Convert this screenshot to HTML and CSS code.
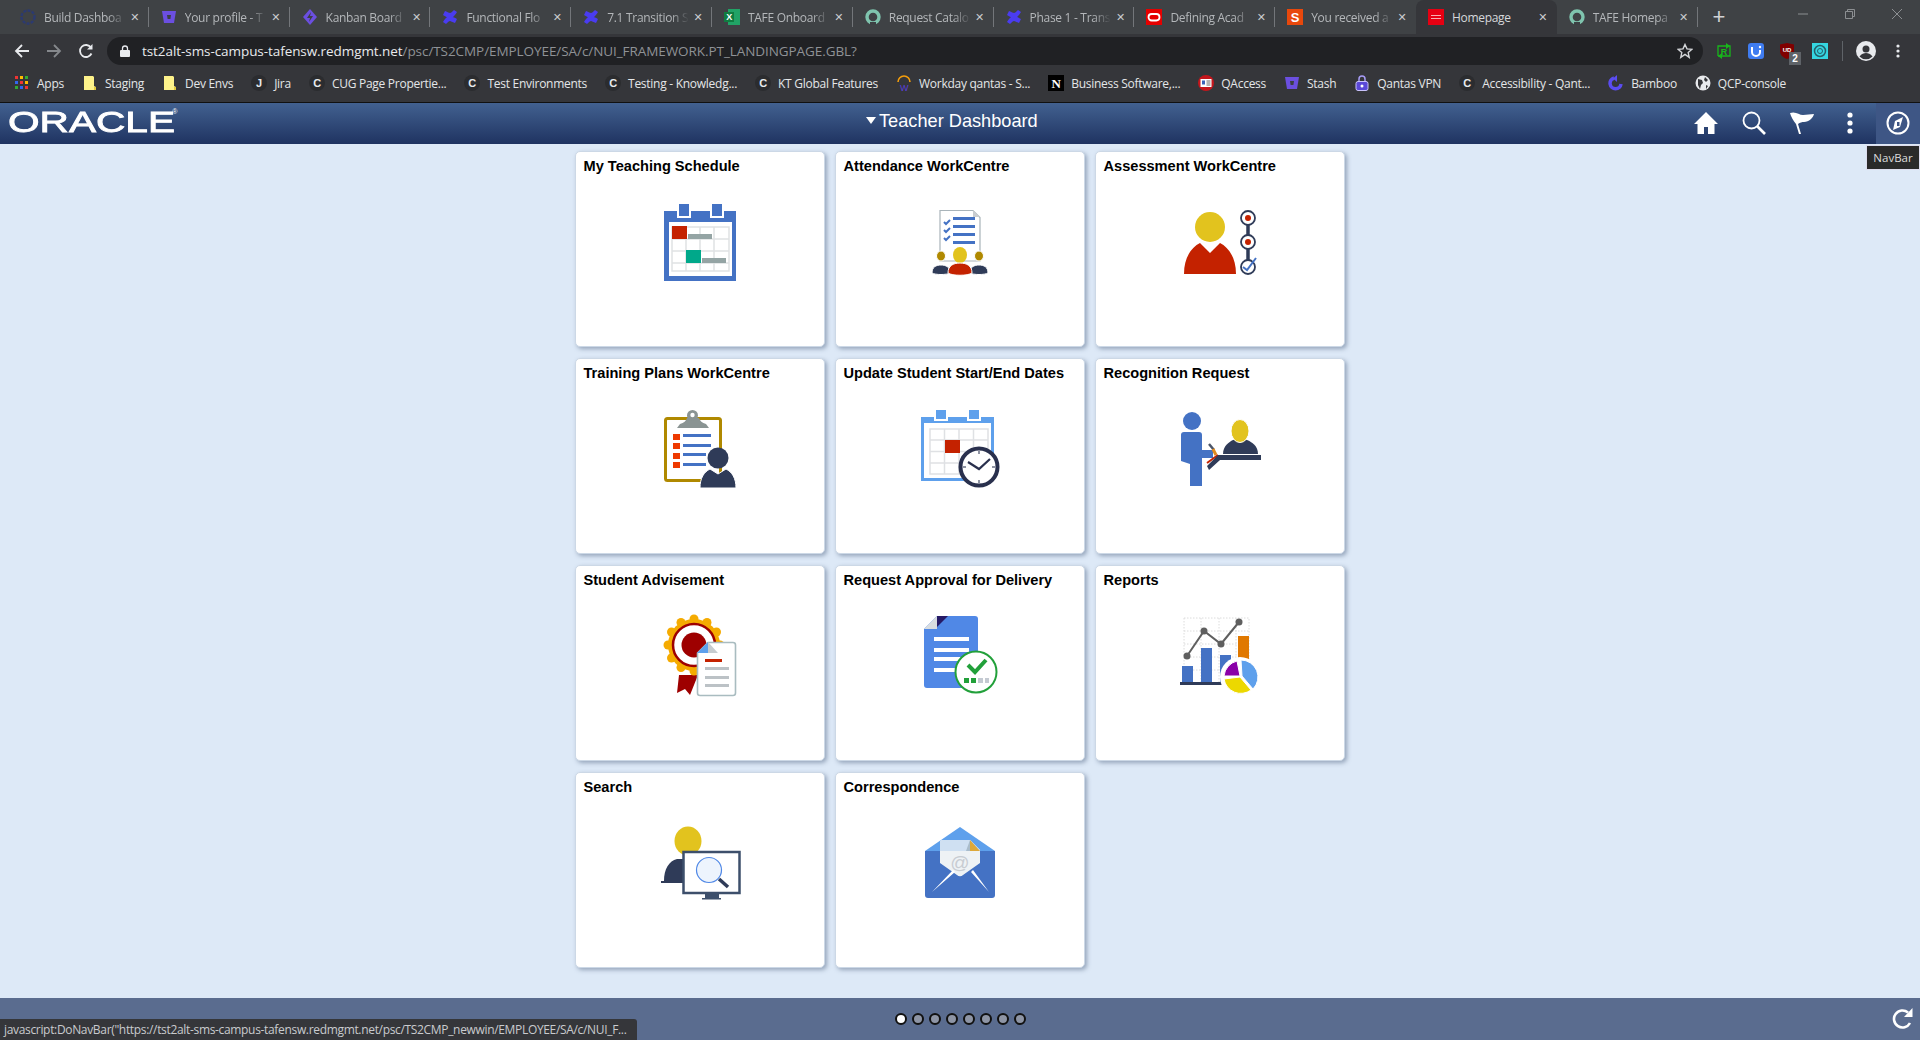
FILE: index.html
```html
<!doctype html>
<html>
<head>
<meta charset="utf-8">
<title>Homepage</title>
<link rel="stylesheet" href="styles.css">
</head>

<body>
<svg class="defs" width="0" height="0">
    <symbol id="fav-ring" viewBox="0 0 16 16"><circle cx="8" cy="8" r="6" fill="none" stroke="#7fc4ae" stroke-width="3.4"/><rect x="5" y="13" width="6" height="3" fill="#3c4043"/></symbol>
    <symbol id="fav-conf" viewBox="0 0 16 16"><path d="M1 13c3-5 5-6 7-6s5 2 7 3l-2 4c-3-1-4-2-5-2s-2 1-4 3zM15 3c-3 5-5 6-7 6S3 7 1 6l2-4c3 1 4 2 5 2s2-1 4-3z" fill="#4a3cf0"/></symbol>
    <symbol id="fav-stash" viewBox="0 0 16 16"><path d="M1 2h14l-2 12H3z" fill="#6b4fe0"/><path d="M6 6h4l-.6 4H6.600z" fill="#3c4043"/></symbol>
    <symbol id="fav-c" viewBox="0 0 16 16"><circle cx="8" cy="8" r="8" fill="#2b2c2f"/><text x="8" y="12" text-anchor="middle" class="fav-letter">C</text></symbol>
    <symbol id="fav-note" viewBox="0 0 16 16"><path d="M2 1h9l1 1v9l2 1v3H2z" fill="#fdf28a"/><path d="M12 12h2v3h-2z" fill="#e3c93c"/></symbol>
    <symbol id="fav-oracle" viewBox="0 0 16 16"><rect width="16" height="16" fill="#e60000"/><rect x="2.500" y="5" width="11" height="6.500" rx="3.200" fill="none" stroke="#fff" stroke-width="1.800"/></symbol>
</svg>

<div class="tabstrip">
    <div class="tab"><svg class="fav" viewBox="0 0 16 16"><circle cx="8" cy="8" r="6.500" fill="none" stroke="#2c3a70" stroke-width="2.400" stroke-dasharray="3 1.200"/></svg><span class="tab-label">Build Dashboa</span><span class="tab-x">✕</span></div>
    <div class="tab"><svg class="fav"><use href="#fav-stash"/></svg><span class="tab-label">Your profile - T</span><span class="tab-x">✕</span></div>
    <div class="tab"><svg class="fav" viewBox="0 0 16 16"><path d="M8 0l7 8-7 8-7-8z" fill="#6b4fe0"/><path d="M9 3L5 9h3l-1 4 4-6H8z" fill="#3c4043"/></svg><span class="tab-label">Kanban Board</span><span class="tab-x">✕</span></div>
    <div class="tab"><svg class="fav"><use href="#fav-conf"/></svg><span class="tab-label">Functional Flo</span><span class="tab-x">✕</span></div>
    <div class="tab"><svg class="fav"><use href="#fav-conf"/></svg><span class="tab-label">7.1 Transition S</span><span class="tab-x">✕</span></div>
    <div class="tab"><svg class="fav" viewBox="0 0 16 16"><rect x="4" width="12" height="16" fill="#21a366"/><rect y="3" width="10" height="10" fill="#107c41"/><text x="5" y="11" text-anchor="middle" class="fav-x">X</text></svg><span class="tab-label">TAFE Onboard</span><span class="tab-x">✕</span></div>
    <div class="tab"><svg class="fav"><use href="#fav-ring"/></svg><span class="tab-label">Request Catalo</span><span class="tab-x">✕</span></div>
    <div class="tab"><svg class="fav"><use href="#fav-conf"/></svg><span class="tab-label">Phase 1 - Trans</span><span class="tab-x">✕</span></div>
    <div class="tab"><svg class="fav"><use href="#fav-oracle"/></svg><span class="tab-label">Defining Acad</span><span class="tab-x">✕</span></div>
    <div class="tab before-active"><svg class="fav" viewBox="0 0 16 16"><rect width="16" height="16" fill="#e8480c"/><text x="8" y="13" text-anchor="middle" class="fav-s">S</text></svg><span class="tab-label">You received a</span><span class="tab-x">✕</span></div>
    <div class="tab active"><svg class="fav" viewBox="0 0 16 16"><rect width="16" height="16" fill="#e60012"/><rect x="3" y="6" width="10" height="1" fill="#f7b0b0"/><rect x="3" y="9" width="10" height="1" fill="#f7b0b0"/></svg><span class="tab-label">Homepage</span><span class="tab-x">✕</span></div>
    <div class="tab"><svg class="fav"><use href="#fav-ring"/></svg><span class="tab-label">TAFE Homepa</span><span class="tab-x">✕</span></div>
    <span class="new-tab">+</span>
    <div class="win-controls">
        <svg width="14" height="14" viewBox="0 0 14 14"><path d="M2 7h10" stroke="#8c8f92"/></svg>
        <svg width="14" height="14" viewBox="0 0 14 14"><path d="M2.500 4.500h7v7h-7zM4.500 4.500v-2h7v7h-2" fill="none" stroke="#8c8f92"/></svg>
        <svg width="14" height="14" viewBox="0 0 14 14"><path d="M2 2l10 10M12 2L2 12" stroke="#8c8f92"/></svg>
    </div>
</div>

<div class="toolbar">
    <svg class="nav-btn" viewBox="0 0 16 16"><path d="M15 8H2M8 2L2 8l6 6" fill="none" stroke="#e8eaed" stroke-width="1.800"/></svg>
    <svg class="nav-btn" viewBox="0 0 16 16"><path d="M1 8h13M8 2l6 6-6 6" fill="none" stroke="#85888c" stroke-width="1.800"/></svg>
    <svg class="nav-btn" viewBox="0 0 16 16"><path d="M13.500 10.500A6 6 0 1 1 13 4.600" fill="none" stroke="#e8eaed" stroke-width="1.800"/><path d="M14.500 1v5.500H9z" fill="#e8eaed"/></svg>
    <div class="omnibox">
        <svg class="lock" width="10" height="12" viewBox="0 0 10 12"><path d="M2.500 5V3.500a2.500 2.500 0 0 1 5 0V5" fill="none" stroke="#e8eaed" stroke-width="1.300"/><rect y="5" width="10" height="7" rx="1" fill="#e8eaed"/></svg>
        <span class="url"><b>tst2alt-sms-campus-tafensw.redmgmt.net</b>/psc/TS2CMP/EMPLOYEE/SA/c/NUI_FRAMEWORK.PT_LANDINGPAGE.GBL?</span>
        <svg class="star" width="16" height="16" viewBox="0 0 16 16"><path d="M8 1.500l2 4.400 4.800.5-3.600 3.200 1 4.700L8 11.400l-4.200 2.900 1-4.700L1.200 6.400l4.800-.5z" fill="none" stroke="#d5d7da" stroke-width="1.400"/></svg>
    </div>
    <div class="extensions">
        <svg width="16" height="18" viewBox="0 0 16 18"><path d="M2 14V4h12v10H2" fill="none" stroke="#18b71b" stroke-width="1.300"/><path d="M10 1l4 3-4 3zM6 11l-4 3 4 3z" fill="#18b71b"/><text x="8" y="12.500" text-anchor="middle" class="ext-r">R</text></svg>
        <svg width="16" height="18" viewBox="0 0 16 18"><rect y="1" width="16" height="16" rx="3" fill="#3f7cf0"/><path d="M4 5v5a4 4 0 0 0 8 0V8" fill="none" stroke="#fff" stroke-width="2"/><circle cx="12" cy="5" r="1.200" fill="#fff"/></svg>
        <div class="ublock"><svg width="14" height="16" viewBox="0 0 14 16"><path d="M0 1.500L7 0l7 1.500V8c0 4-3 6.500-7 8-4-1.500-7-4-7-8z" fill="#800000"/><text x="7" y="9" text-anchor="middle" class="ext-ub">UD</text></svg><span class="badge">2</span></div>
        <svg width="16" height="18" viewBox="0 0 16 18"><rect y="1" width="16" height="16" fill="#35d6e0"/><circle cx="8" cy="9" r="5.500" fill="none" stroke="#25606a" stroke-width="1.500"/><circle cx="8" cy="9" r="2.500" fill="none" stroke="#25606a"/></svg>
    </div>
    <span class="tool-sep"></span>
    <svg class="avatar" width="20" height="20" viewBox="0 0 20 20"><circle cx="10" cy="10" r="10" fill="#e8eaed"/><circle cx="10" cy="8" r="3.500" fill="#35363a"/><path d="M3.500 15.500c2-3 4.500-3.500 6.500-3.500s4.500.5 6.500 3.500a9 9 0 0 1-13 0z" fill="#35363a"/></svg>
    <svg class="menu-dots" width="4" height="14" viewBox="0 0 4 14"><circle cx="2" cy="2" r="1.600" fill="#e8eaed"/><circle cx="2" cy="7" r="1.600" fill="#e8eaed"/><circle cx="2" cy="12" r="1.600" fill="#e8eaed"/></svg>
</div>

<div class="bookmarks">
    <a><svg class="fav" viewBox="0 0 16 16"><path d="M1 1h3v3H1z" fill="#e33"/><path d="M6 1h3v3H6z" fill="#fb0"/><path d="M11 1h3v3h-3z" fill="#3a3"/><path d="M1 6h3v3H1z" fill="#36e"/><path d="M6 6h3v3H6z" fill="#e33"/><path d="M11 6h3v3h-3z" fill="#fb0"/><path d="M1 11h3v3H1z" fill="#3a3"/><path d="M6 11h3v3H6z" fill="#36e"/><path d="M11 11h3v3h-3z" fill="#e33"/></svg>Apps</a>
    <a><svg class="fav"><use href="#fav-note"/></svg>Staging</a>
    <a><svg class="fav"><use href="#fav-note"/></svg>Dev Envs</a>
    <a><svg class="fav" viewBox="0 0 16 16"><circle cx="8" cy="8" r="8" fill="#2b2c2f"/><text x="8" y="12" text-anchor="middle" class="fav-letter">J</text></svg>Jira</a>
    <a><svg class="fav"><use href="#fav-c"/></svg>CUG Page Propertie...</a>
    <a><svg class="fav"><use href="#fav-c"/></svg>Test Environments</a>
    <a><svg class="fav"><use href="#fav-c"/></svg>Testing - Knowledg...</a>
    <a><svg class="fav"><use href="#fav-c"/></svg>KT Global Features</a>
    <a><svg class="fav" viewBox="0 0 16 16"><path d="M2 7a6 6 0 0 1 12 0" fill="none" stroke="#f59e0b" stroke-width="1.600"/><text x="8" y="15.500" text-anchor="middle" class="fav-w">W</text></svg>Workday qantas - S...</a>
    <a><svg class="fav" viewBox="0 0 16 16"><rect width="16" height="16" fill="#000"/><text x="8" y="13" text-anchor="middle" class="fav-n">N</text></svg>Business Software,...</a>
    <a><svg class="fav" viewBox="0 0 16 16"><circle cx="8" cy="8" r="8" fill="#c4161c"/><rect x="2.500" y="4" width="11" height="8" fill="#fff"/><rect x="4" y="5.500" width="3" height="4" fill="#3a62b8"/><path d="M8.500 6h4M8.500 8h4M8.500 10h4" stroke="#666"/></svg>QAccess</a>
    <a><svg class="fav"><use href="#fav-stash"/></svg>Stash</a>
    <a><svg class="fav" viewBox="0 0 16 16"><path d="M5 7V4a3 3 0 0 1 6 0v3" fill="none" stroke="#a79cf5" stroke-width="1.500"/><rect x="2" y="6.500" width="12" height="9" rx="2" fill="#5a48d8" stroke="#c9c2fa"/><circle cx="8" cy="11" r="1.500" fill="#fff"/></svg>Qantas VPN</a>
    <a><svg class="fav"><use href="#fav-c"/></svg>Accessibility - Qant...</a>
    <a><svg class="fav" viewBox="0 0 16 16"><path d="M13 9a5.500 5.500 0 1 1-7-6" fill="none" stroke="#5a4cf0" stroke-width="3.500"/><path d="M9 0v7L5 3.500z" fill="#5a4cf0"/></svg>Bamboo</a>
    <a><svg class="fav" viewBox="0 0 16 16"><circle cx="8" cy="8" r="7.500" fill="#e8eaed"/><path d="M3 4l4 1 1 3-2 2-1 4-2-4zM10 2l3 3-2 2-2-2zM11 10l2 1-2 3z" fill="#35363a"/></svg>QCP-console</a>
</div>

<div class="ps-header">
    <div class="oracle-logo"><span class="oracle-word">ORACLE</span><span class="oracle-reg">®</span></div>
    <div class="ps-title"><span class="ps-caret"></span>Teacher Dashboard</div>
    <div class="ps-actions">
        <svg class="ps-icon" viewBox="0 0 24 24"><path d="M12 1L0 13h3.500v10H10v-7h4v7h6.500V13H24z" fill="#fff"/></svg>
        <svg class="ps-icon" viewBox="0 0 24 24"><circle cx="9.500" cy="9.500" r="8" fill="none" stroke="#fff" stroke-width="1.800"/><path d="M15 15l8 8" stroke="#fff" stroke-width="2.600"/></svg>
        <svg class="ps-icon" viewBox="0 0 24 24"><path d="M0 2c6-2 9 2 13 2s7-1 11-1c-1 4-5 8-10 8-2 0-4 .5-6 2l3 10H9L6 13C3 9 1 6 0 2z" fill="#fff"/></svg>
        <svg class="ps-icon" viewBox="0 0 24 24"><circle cx="12" cy="4" r="2.600" fill="#fff"/><circle cx="12" cy="12" r="2.600" fill="#fff"/><circle cx="12" cy="20" r="2.600" fill="#fff"/></svg>
    </div>
    <div class="navbar-btn">
        <svg width="24" height="24" viewBox="0 0 24 24"><circle cx="12" cy="12" r="10.500" fill="none" stroke="#fff" stroke-width="2"/><path d="M17 6l-3 10-7 3 2-9z" fill="#fff"/><path d="M11 11h2.500v4H11z" fill="#3e5685"/></svg>
    </div>
    <div class="tooltip">NavBar</div>
</div>

<div class="tile-area">
    <div class="tile">
        <div class="tile-title">My Teaching Schedule</div>
        <svg class="tile-icon" viewBox="0 0 80 80">
            <rect x="3" y="8" width="72" height="70" fill="#4472c4"/>
            <rect x="16" y="0" width="14" height="15" fill="#fff"/><rect x="49" y="0" width="14" height="15" fill="#fff"/>
            <rect x="18" y="1" width="10" height="12" fill="#4472c4"/><rect x="51" y="1" width="10" height="12" fill="#4472c4"/>
            <rect x="8" y="19" width="63" height="54" fill="#fff"/>
            <path d="M11 24h57v44H11zM25 24v44M39 24v44M53 24v44M11 36h57M11 48h57M11 60h57" fill="none" stroke="#e0e2e4" stroke-width="1.500"/>
            <rect x="11" y="23" width="15" height="13" fill="#c42200"/><rect x="27" y="31" width="24" height="5" fill="#94a4a4"/>
            <rect x="25" y="47" width="15" height="13" fill="#00a88a"/><rect x="41" y="55" width="24" height="5" fill="#94a4a4"/>
        </svg>
    </div>
    <div class="tile">
        <div class="tile-title">Attendance WorkCentre</div>
        <svg class="tile-icon" viewBox="0 0 80 80">
            <path d="M19 7.500h33l7 7V58H19z" fill="#fff" stroke="#a9b4ba" stroke-width="1.200"/><path d="M52 7l7 7h-7z" fill="#c9cdd0"/>
            <path d="M23 19l2 2 4-4M23 27l2 2 4-4M23 35l2 2 4-4" fill="none" stroke="#4472c4" stroke-width="2"/>
            <path d="M32 14h22v3H32zM32 22h22v3H32zM32 30h22v3H32zM32 38h22v3H32z" fill="#4472c4"/>
            <ellipse cx="20" cy="53" rx="4.500" ry="5" fill="#b08900" stroke="#fff"/><path d="M11 70c0-6 4-8 9-8s9 2 9 8c-3 2-15 2-18 0z" fill="#2f3b58" stroke="#fff"/>
            <ellipse cx="58" cy="53" rx="4.500" ry="5" fill="#b08900" stroke="#fff"/><path d="M49 70c0-6 4-8 9-8s9 2 9 8c-3 2-15 2-18 0z" fill="#2f3b58" stroke="#fff"/>
            <ellipse cx="39" cy="52" rx="7" ry="8" fill="#e2c31e"/><path d="M27 70c0-7 5-10 12-10s12 3 12 10c-4 3-20 3-24 0z" fill="#c42200" stroke="#fff"/>
        </svg>
    </div>
    <div class="tile">
        <div class="tile-title">Assessment WorkCentre</div>
        <svg class="tile-icon" viewBox="0 0 80 80">
            <circle cx="29" cy="24" r="15" fill="#e2c31e"/>
            <path d="M3 71c0-17 8-27 16-31l10 10 10-10c8 4 16 14 16 31z" fill="#c42200"/>
            <path d="M67 15v49" stroke="#2f3b58" stroke-width="3.500"/>
            <circle cx="67" cy="15" r="7" fill="#fff" stroke="#2f3b58" stroke-width="1.800"/><circle cx="67" cy="15" r="3" fill="#c42200"/>
            <circle cx="67" cy="39" r="7" fill="#fff" stroke="#2f3b58" stroke-width="1.800"/><circle cx="67" cy="39" r="3" fill="#c42200"/>
            <circle cx="67" cy="64" r="7" fill="#fff" stroke="#2f3b58" stroke-width="1.800"/>
            <path d="M62 64l4 3 9-12" fill="none" stroke="#4472c4" stroke-width="2"/>
        </svg>
    </div>

    <div class="tile">
        <div class="tile-title">Training Plans WorkCentre</div>
        <svg class="tile-icon" viewBox="0 0 80 80">
            <rect x="4.500" y="8.500" width="55" height="62" rx="2" fill="#fff" stroke="#b08900" stroke-width="3"/>
            <path d="M16 18l3-4c4-1 6-3 7-6h12c1 3 3 5 7 6l3 4z" fill="#8a9493"/><circle cx="31.500" cy="5.500" r="5.500" fill="#8a9493"/><circle cx="31.500" cy="5" r="2.200" fill="#fff"/>
            <path d="M12 24h7v6h-7zM12 33h7v6h-7zM12 43h7v6h-7zM12 52h7v6h-7z" fill="#ee3900"/>
            <path d="M22 24h28v3H22zM22 34h28v3H22zM22 43h23v3H22zM22 53h23v3H22z" fill="#4472c4"/>
            <circle cx="57" cy="48" r="10.500" fill="#2f3b58"/>
            <path d="M39 78c0-10 4-16 10-19l8 5 8-5c6 3 10 9 10 19z" fill="#2f3b58" stroke="#fff"/>
        </svg>
    </div>
    <div class="tile">
        <div class="tile-title">Update Student Start/End Dates</div>
        <svg class="tile-icon" viewBox="0 0 80 80">
            <rect x="0" y="7" width="73" height="64" fill="#5ea0ec"/><rect x="3" y="13" width="67" height="55" fill="#fff"/>
            <rect x="13" y="0" width="14" height="11" fill="#fff"/><rect x="46" y="0" width="14" height="11" fill="#fff"/>
            <rect x="15" y="0" width="10" height="9" fill="#5ea0ec"/><rect x="48" y="0" width="10" height="9" fill="#5ea0ec"/>
            <path d="M9 19h58v45H9zM23.500 19v45M38 19v45M52.500 19v45M9 30h58M9 41.500h58M9 53h58" fill="none" stroke="#dfe1e4" stroke-width="1.500"/>
            <rect x="24" y="30" width="15" height="13" fill="#c42200"/>
            <circle cx="58" cy="57" r="18.500" fill="#fff" stroke="#29304d" stroke-width="4"/>
            <path d="M47 52l11 7 11-10" fill="none" stroke="#29304d" stroke-width="2.200"/>
            <path d="M58 41v3M58 70v3M42 57h3M71 57h3" stroke="#6b7285" stroke-width="1.500"/>
        </svg>
    </div>
    <div class="tile">
        <div class="tile-title">Recognition Request</div>
        <svg class="tile-icon" viewBox="0 0 80 80">
            <circle cx="11" cy="11" r="9" fill="#4472c4"/>
            <path d="M3 22h15a3 3 0 0 1 3 3v15h11v8H21v28H9V54l-9-3V25a3 3 0 0 1 3-3z" fill="#4472c4"/>
            <path d="M28 34l5 6" stroke="#4b5568" stroke-width="2.500"/><path d="M32 39l3 6" stroke="#e08a1e" stroke-width="3"/>
            <path d="M26 53l11-8" stroke="#c42200" stroke-width="2"/>
            <path d="M28 60l11-10h41v-5H37L26 56z" fill="#2f3b58"/>
            <path d="M42 44c0-8 6-12 10-14h14c5 2 11 6 11 14z" fill="#2f3b58"/>
            <ellipse cx="59" cy="21" rx="9" ry="11.500" fill="#e2c31e" stroke="#fff"/>
        </svg>
    </div>

    <div class="tile">
        <div class="tile-title">Student Advisement</div>
        <svg class="tile-icon" viewBox="0 0 80 80">
            <path d="M18 58l-2 18 8-4 5 6 8-20z" fill="#9e0000"/>
            <circle cx="33" cy="28" r="26" fill="#f5ab00"/>
            <g fill="#f5ab00"><circle cx="33" cy="2" r="4.500"/><circle cx="46" cy="5.500" r="4.500"/><circle cx="55.500" cy="15" r="4.500"/><circle cx="59" cy="28" r="4.500"/><circle cx="55.500" cy="41" r="4.500"/><circle cx="46" cy="50.500" r="4.500"/><circle cx="33" cy="54" r="4.500"/><circle cx="20" cy="50.500" r="4.500"/><circle cx="10.500" cy="41" r="4.500"/><circle cx="7" cy="28" r="4.500"/><circle cx="10.500" cy="15" r="4.500"/><circle cx="20" cy="5.500" r="4.500"/></g>
            <circle cx="33" cy="28" r="21" fill="#fff" stroke="#9e0000" stroke-width="2.500"/>
            <circle cx="33" cy="28" r="12.500" fill="#9e0000"/>
            <path d="M47 25.500h25a2.500 2.500 0 0 1 2.500 2.500v48a2.500 2.500 0 0 1-2.500 2.500H39a2.500 2.500 0 0 1-2.500-2.500V36z" fill="#fff" stroke="#a9bcc0" stroke-width="1.600"/>
            <path d="M47 25l-11 11h11z" fill="#5ea0ec"/><path d="M47 25v11h10z" fill="#c6ccd0"/>
            <path d="M44 42h17v3H44z" fill="#c42200"/><path d="M44 50h24v3H44zM44 59h24v3H44zM44 67h24v3H44z" fill="#bcc2c6"/>
        </svg>
    </div>
    <div class="tile">
        <div class="tile-title">Request Approval for Delivery</div>
        <svg class="tile-icon" viewBox="0 0 80 80">
            <path d="M16-1h38a3 3 0 0 1 3 3v66a3 3 0 0 1-3 3H6a3 3 0 0 1-3-3V12z" fill="#5088e6"/>
            <path d="M16-1L3 12h13z" fill="#d9dde0"/><path d="M16-1h11L16 10z" fill="#261a66"/>
            <path d="M13 20h35v4H13zM13 31h35v4H13zM13 40h35v4H13zM13 51h35v4H13z" fill="#fff"/>
            <circle cx="55" cy="55" r="20.500" fill="#fff" stroke="#22a03a" stroke-width="2"/>
            <path d="M47 48l7 7 11-12" fill="none" stroke="#22a03a" stroke-width="4"/>
            <path d="M43 61h5v5h-5zM50 61h5v5h-5z" fill="#22a03a"/><path d="M57 61h5v5h-5zM64 61h4v5h-4z" fill="#c4cad2"/>
        </svg>
    </div>
    <div class="tile">
        <div class="tile-title">Reports</div>
        <svg class="tile-icon" viewBox="0 0 80 80">
            <path d="M3 1h65v64M3 1v64M3 14h65M3 27h65M3 40h65M3 53h65M20 1v64M38 1v64M55 1v64" fill="none" stroke="#dcdcdc" stroke-dasharray="1.500 1.500"/>
            <path d="M1 49h11v16H1zM20 31h11v34H20zM39 38h11v27H39z" fill="#4472c4"/>
            <rect x="57" y="19" width="11" height="26" fill="#e07800"/>
            <rect x="-1" y="65" width="46" height="3" fill="#2f3b58"/>
            <path d="M6 39l17-25 17 13L58 5" fill="none" stroke="#5f5f5f" stroke-width="2"/>
            <circle cx="6" cy="39" r="3.500" fill="#5f5f5f"/><circle cx="23" cy="14" r="3.500" fill="#5f5f5f"/><circle cx="40" cy="27" r="3.500" fill="#5f5f5f"/><circle cx="58" cy="5" r="3.500" fill="#5f5f5f"/>
            <circle cx="59" cy="60" r="20" fill="#fff"/>
            <path d="M60 43a17 17 0 0 1 12 29L61 59z" fill="#5ea0ec" stroke="#fff"/>
            <path d="M59 60l11 13a17 17 0 0 1-27-11z" fill="#ecd800" stroke="#fff"/>
            <path d="M43 59a17 17 0 0 1 13-15l3 15z" fill="#8a00a8" stroke="#fff"/>
        </svg>
    </div>

    <div class="tile">
        <div class="tile-title">Search</div>
        <svg class="tile-icon" viewBox="0 0 80 80">
            <ellipse cx="27" cy="17" rx="13.500" ry="14.500" fill="#e2c31e"/>
            <path d="M0 59v-2h3c0-12 5-20 13-22h14v24z" fill="#2f3b58"/>
            <rect x="22.500" y="28" width="56" height="41" fill="#fff" stroke="#3d4f6b" stroke-width="2.500"/>
            <path d="M44 70h14v4H44zM41 74h19v1.500H41z" fill="#3d4f6b"/>
            <circle cx="48" cy="46" r="12.500" fill="#edf4fd" stroke="#5088e6" stroke-width="1.200"/>
            <path d="M58 55l9 8" stroke="#2f3b58" stroke-width="3.500"/>
        </svg>
    </div>
    <div class="tile">
        <div class="tile-title">Correspondence</div>
        <svg class="tile-icon" viewBox="0 0 80 80">
            <path d="M4 27L39 3l35 24z" fill="#5ea0ec"/>
            <path d="M4 27h70v44a3 3 0 0 1-3 3H7a3 3 0 0 1-3-3z" fill="#4472c4"/>
            <path d="M19 39V18a2 2 0 0 1 2-2h28l10 10v13L42 51a4 4 0 0 1-6 0z" fill="#eef2f5"/>
            <path d="M19 27v-9a2 2 0 0 1 2-2h28l10 10v1z" fill="#cfe0f2"/>
            <path d="M49 16l10 11H49z" fill="#dda83a"/><path d="M49 16v11h-4z" fill="#a9bccb"/>
            <path d="M11 68l21-22 2 2zM68 68L52 46l-2 2z" fill="#fff"/>
            <text x="39" y="45" text-anchor="middle" class="at-sign">@</text>
        </svg>
    </div>
</div>

<div class="ps-footer">
    <div class="dots">
        <span class="dot on"></span><span class="dot"></span><span class="dot"></span><span class="dot"></span><span class="dot"></span><span class="dot"></span><span class="dot"></span><span class="dot"></span>
    </div>
    <svg class="refresh" width="22" height="24" viewBox="0 0 22 24"><path d="M18 16a8.500 8.500 0 1 1-2-10.500" fill="none" stroke="#fff" stroke-width="2.600"/><path d="M20.500 1v9h-8.500z" fill="#fff"/></svg>
    <div class="status-bubble">javascript:DoNavBar("https://tst2alt-sms-campus-tafensw.redmgmt.net/psc/TS2CMP_newwin/EMPLOYEE/SA/c/NUI_F...</div>
</div>
</body>
</html>
```

FILE: styles.css
```css
html, body {
    margin: 0;
    height: 100%;
}
body {
    display: flex;
    flex-direction: column;
    height: 1040px;
    overflow: hidden;
    background: #dde9f7;
    font-family: "Open Sans", "Liberation Sans", sans-serif;
}
.defs {
    position: absolute;
}
.fav {
    width: 16px;
    height: 16px;
    flex: none;
}
.fav-letter {
    font: bold 11px "Liberation Sans", sans-serif;
    fill: #e8eaed;
}
.fav-x {
    font: bold 9px "Liberation Sans", sans-serif;
    fill: #fff;
}
.fav-s {
    font: bold 13px "Liberation Sans", sans-serif;
    fill: #fff;
}
.fav-w {
    font: 9px "Liberation Sans", sans-serif;
    fill: #5a3fd8;
}
.fav-n {
    font: bold 13px "Liberation Serif", serif;
    fill: #fff;
}

/* chrome: tabs */
.tabstrip {
    display: flex;
    align-items: stretch;
    height: 34px;
    flex: none;
    padding-left: 8px;
    background: #3f4245;
    color: #b4b7ba;
    font-size: 12px;
    letter-spacing: -0.3px;
}
.tab {
    position: relative;
    display: flex;
    align-items: center;
    width: 140.8px;
    box-sizing: border-box;
    padding: 0 7px 0 12px;
}
.tab::after {
    content: "";
    position: absolute;
    right: 0;
    top: 7px;
    height: 20px;
    width: 1px;
    background: #73767a;
}
.tab.active::after, .tab.before-active::after {
    display: none;
}
.tab.active {
    background: #35363a;
    border-radius: 8px 8px 0 0;
    color: #d6d8db;
}
.tab-label {
    flex: 1;
    margin-left: 8px;
    overflow: hidden;
    white-space: nowrap;
    -webkit-mask-image: linear-gradient(to right, #000 78%, transparent 100%);
    mask-image: linear-gradient(to right, #000 78%, transparent 100%);
}
.tab.active .tab-label {
    -webkit-mask-image: none;
    mask-image: none;
}
.tab-x {
    width: 14px;
    margin-left: 2px;
    font: bold 11px "DejaVu Sans", sans-serif;
    text-align: center;
    color: #c9cbce;
}
.new-tab {
    align-self: center;
    margin-left: 15px;
    font: 22px "Liberation Sans", sans-serif;
    color: #d0d2d5;
}
.win-controls {
    display: flex;
    align-items: center;
    gap: 33px;
    margin-left: auto;
    margin-right: 16px;
    margin-top: -6px;
}

/* chrome: address bar */
.toolbar {
    display: flex;
    align-items: center;
    height: 34px;
    flex: none;
    background: #35363a;
}
.nav-btn {
    width: 16px;
    height: 16px;
    margin-left: 13px;
    margin-right: 3px;
}
.nav-btn:first-child {
    margin-left: 14px;
}
.omnibox {
    display: flex;
    align-items: center;
    width: 1596px;
    height: 28px;
    margin-left: 10px;
    border-radius: 14px;
    background: #202124;
    box-sizing: border-box;
    padding: 0 10px 0 13px;
}
.url {
    margin-left: 12px;
    font-size: 13.5px;
    letter-spacing: -0.07px;
    color: #8f9296;
    white-space: nowrap;
}
.url b {
    font-weight: 400;
    color: #e8eaed;
}
.star {
    margin-left: auto;
}
.extensions {
    display: flex;
    align-items: center;
    gap: 16px;
    margin-left: 13px;
}
.ext-r {
    font: bold 9px "Liberation Sans", sans-serif;
    fill: #18b71b;
}
.ext-ub {
    font: bold 6px "Liberation Sans", sans-serif;
    fill: #fff;
}
.ublock {
    position: relative;
    width: 16px;
    height: 18px;
}
.badge {
    position: absolute;
    left: 9px;
    top: 10px;
    width: 12px;
    height: 13px;
    background: #5f6368;
    color: #fff;
    font: bold 10px/13px "Liberation Sans", sans-serif;
    text-align: center;
}
.tool-sep {
    width: 1px;
    height: 20px;
    margin-left: 14px;
    background: #5f6368;
}
.avatar {
    margin-left: 13px;
}
.menu-dots {
    margin-left: 20px;
}

/* chrome: bookmarks */
.bookmarks {
    display: flex;
    align-items: center;
    gap: 18px;
    height: 34px;
    flex: none;
    box-sizing: border-box;
    padding: 0 0 4px 14px;
    background: #35363a;
    color: #e4e6e8;
    font-size: 12px;
    letter-spacing: -0.27px;
    white-space: nowrap;
}
.bookmarks a {
    display: flex;
    align-items: center;
    gap: 7px;
}

/* peoplesoft banner */
.ps-header {
    position: relative;
    display: flex;
    align-items: center;
    height: 42px;
    box-sizing: border-box;
    border-top: 1px solid #111;
    flex: none;
    background: linear-gradient(#426190, #1f3361);
}
.oracle-logo {
    display: flex;
    align-items: flex-start;
    width: 180px;
    margin: 0 0 2px 8px;
    color: #fff;
}
.oracle-word {
    font: 29px/29px "Liberation Sans", sans-serif;
    -webkit-text-stroke: 0.8px #fff;
    transform: scaleX(1.4);
    transform-origin: left center;
}
.oracle-reg {
    margin-left: 45px;
    font: 7px "Liberation Sans", sans-serif;
}
.ps-title {
    display: flex;
    align-items: center;
    gap: 3px;
    margin: 0 0 4px 678px;
    font: 18.2px "Liberation Sans", sans-serif;
    color: #fff;
}
.ps-caret {
    width: 0;
    height: 0;
    margin-top: -3px;
    border-left: 5px solid transparent;
    border-right: 5px solid transparent;
    border-top: 7px solid #fff;
}
.ps-actions {
    display: flex;
    align-items: center;
    gap: 24px;
    margin: 0 14px 2px auto;
}
.ps-icon {
    width: 24px;
    height: 24px;
}
.navbar-btn {
    display: flex;
    align-items: center;
    justify-content: center;
    width: 44px;
    height: 41px;
    background: #3e5685;
}
.navbar-btn svg {
    margin-bottom: 2px;
}
.tooltip {
    position: absolute;
    right: 0;
    top: 42px;
    width: 52px;
    height: 23px;
    border: 1px solid #dde;
    background: #2a2a2a;
    color: #ddd;
    font: 11.5px/23px "Open Sans", sans-serif;
    text-align: center;
}

/* tiles */
.tile-area {
    flex: 1;
    display: grid;
    grid-template-columns: repeat(3, 250px);
    grid-auto-rows: 196px;
    gap: 11px 10px;
    padding: 7px 0 0 575px;
    background: #dde9f7;
}
.tile {
    display: flex;
    flex-direction: column;
    box-sizing: border-box;
    border: 1px solid #ccd8e6;
    border-radius: 5px;
    background: #fff;
    box-shadow: 2px 2px 4px rgba(80, 100, 130, 0.5);
}
.tile-title {
    height: 51px;
    padding: 6px 0 0 7.5px;
    box-sizing: border-box;
    font: bold 14.6px "Liberation Sans", sans-serif;
    color: #000;
}
.tile-icon {
    width: 80px;
    height: 80px;
    margin-left: 85px;
    overflow: visible;
}
.at-sign {
    font: 19px "Liberation Sans", sans-serif;
    fill: #c8ccd2;
}

/* footer */
.ps-footer {
    position: relative;
    display: flex;
    align-items: center;
    justify-content: center;
    height: 42px;
    flex: none;
    background: #5a6c8f;
}
.dots {
    display: flex;
    gap: 5px;
}
.dot {
    width: 8px;
    height: 8px;
    border: 2px solid #111;
    border-radius: 50%;
    background: #8e95a5;
}
.dot.on {
    background: #fff;
}
.refresh {
    position: absolute;
    right: 6px;
    top: 9px;
}
.status-bubble {
    position: absolute;
    left: 0;
    bottom: 0;
    width: 637px;
    height: 21px;
    box-sizing: border-box;
    padding-left: 4px;
    border-radius: 0 3px 0 0;
    background: #35363a;
    color: #c9cbce;
    font-size: 12px;
    letter-spacing: -0.33px;
    line-height: 21px;
    white-space: nowrap;
    overflow: hidden;
}
```
